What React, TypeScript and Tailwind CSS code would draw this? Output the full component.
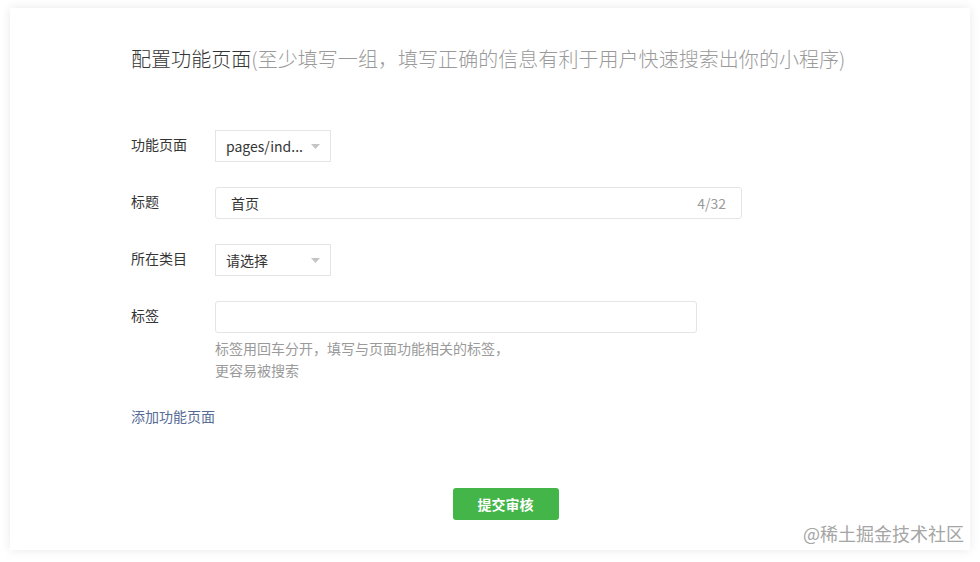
import React from 'react';

const font = { fontFamily: '"Noto Sans CJK SC", "Noto Sans", sans-serif' };

function Caret() {
  return (
    <svg width="9" height="5" viewBox="0 0 9 5" className="shrink-0">
      <path d="M0 0 L9 0 L4.5 5 Z" fill="#c4c4c4" />
    </svg>
  );
}

function Select({ value }: { value: string }) {
  return (
    <div className="w-[116px] h-[32px] border border-[#e4e4e4] bg-white flex items-center justify-between pl-[10px] pr-[10px] text-[14px] text-[#353535]">
      <span className="leading-none">{value}</span>
      <Caret />
    </div>
  );
}

function Row({ label, children, className = '' }: { label: string; children: React.ReactNode; className?: string }) {
  return (
    <div className={`flex items-start ${className}`}>
      <div className="w-[84px] h-[32px] leading-[29px] text-[14px] text-[#353535]">{label}</div>
      <div>{children}</div>
    </div>
  );
}

export default function App() {
  return (
    <div className="relative w-[980px] h-[562px] bg-white overflow-hidden" style={font}>
      <div className="absolute left-[10px] top-[8px] w-[960px] h-[542px] bg-white shadow-[0_0_10px_rgba(0,0,0,0.09)]" />

      <div className="relative pt-[45px] pl-[131px]">
        {/* Title */}
        <div className="h-[28px] leading-[28px] text-[20px] font-light tracking-[0.05px] whitespace-nowrap">
          <span className="text-[#353535]">配置功能页面</span>
          <span className="text-[#9a9a9a]">(至少填写一组，填写正确的信息有利于用户快速搜索出你的小程序)</span>
        </div>

        {/* Form */}
        <div className="mt-[57px] flex flex-col">
          <Row label="功能页面" className="mb-[25px]">
            <Select value="pages/ind..." />
          </Row>

          <Row label="标题" className="mb-[25px]">
            <div className="w-[527px] h-[32px] border border-[#e4e4e4] rounded-[3px] flex items-center justify-between pl-[15px] pr-[15px] text-[14px]">
              <span className="text-[#353535]">首页</span>
              <span className="text-[#9a9a9a]">4/32</span>
            </div>
          </Row>

          <Row label="所在类目" className="mb-[25px]">
            <Select value="请选择" />
          </Row>

          <Row label="标签">
            <div className="w-[482px] h-[32px] border border-[#e4e4e4] rounded-[3px]" />
            <div className="mt-[4px] text-[14px] leading-[22px] text-[#9a9a9a]">
              <div>标签用回车分开，填写与页面功能相关的标签，</div>
              <div>更容易被搜索</div>
            </div>
          </Row>

          <div className="mt-[25px] h-[22px] leading-[20px] text-[14px] text-[#576b95]">添加功能页面</div>

          <div className="mt-[60px] w-[749px] flex justify-center">
            <button className="w-[106px] h-[32px] rounded-[3px] bg-[#44b549] text-white text-[14px] font-semibold">
              提交审核
            </button>
          </div>
        </div>
      </div>

      {/* Watermark */}
      <div className="absolute left-[803px] top-[521px] text-[18px] leading-[24px] text-[#a5a5a5] whitespace-nowrap">
        @稀土掘金技术社区
      </div>
    </div>
  );
}
